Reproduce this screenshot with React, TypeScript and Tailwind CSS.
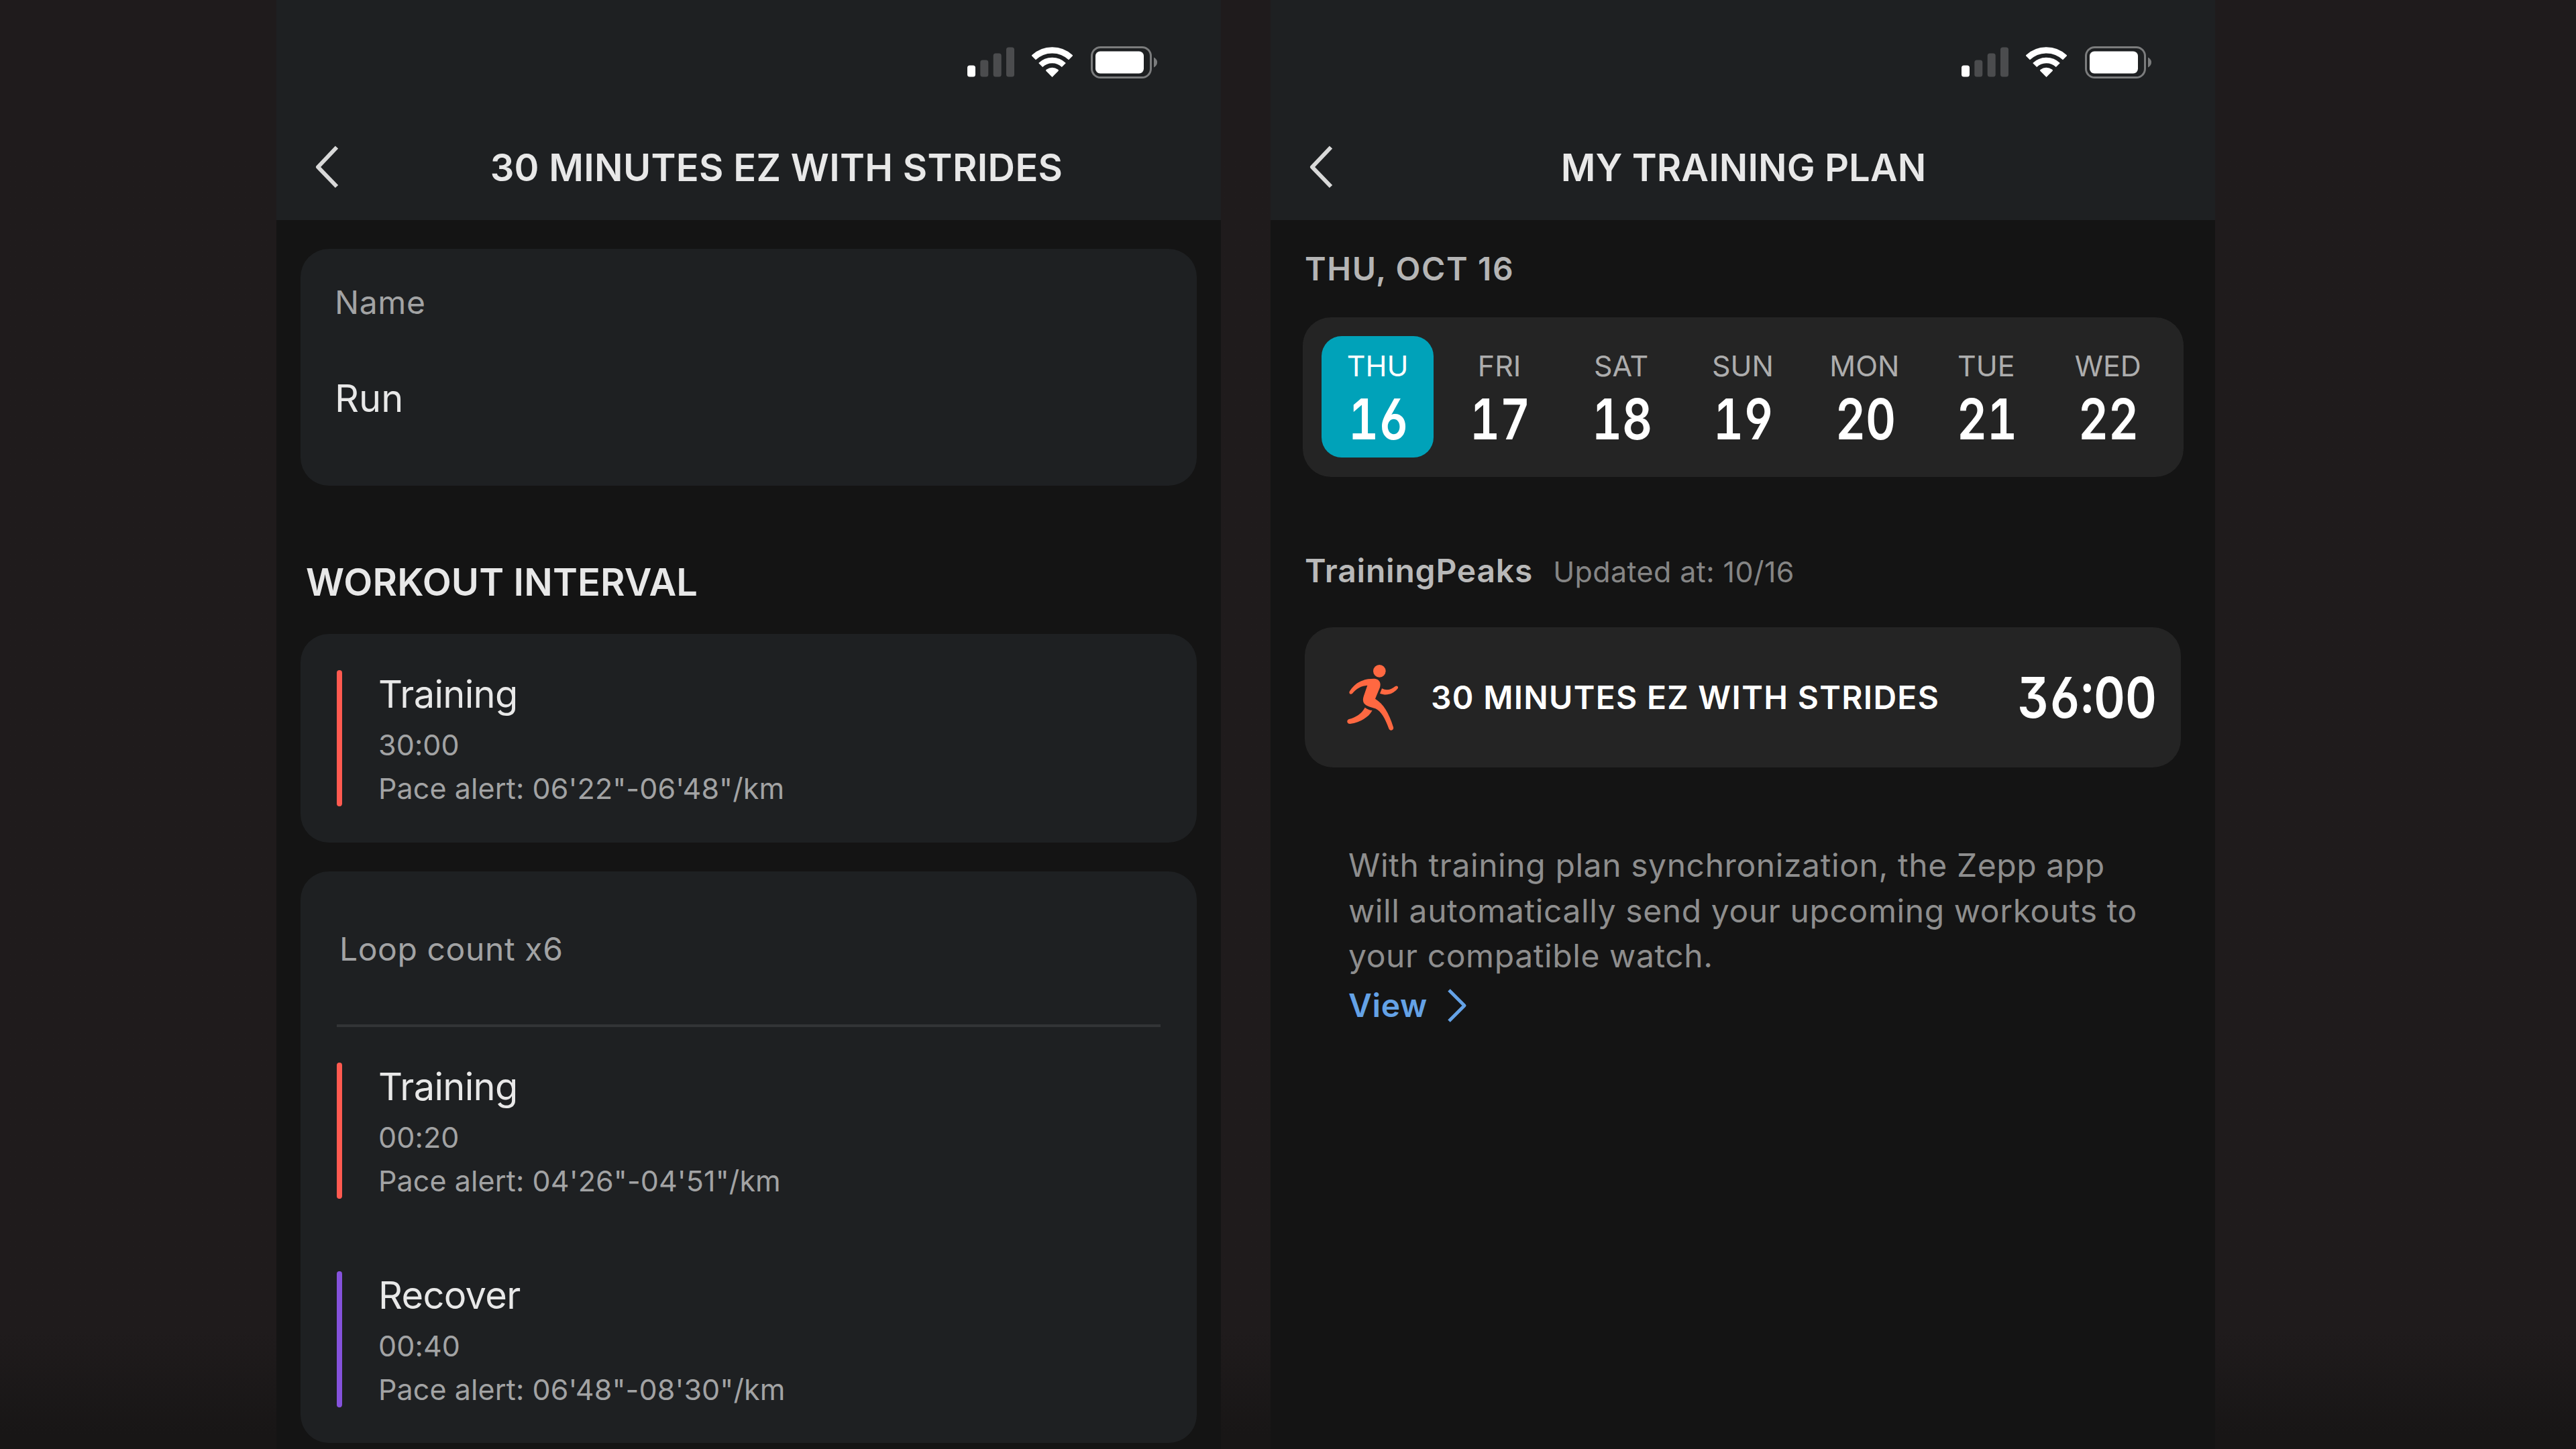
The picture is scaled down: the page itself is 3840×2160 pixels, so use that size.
import type { ReactNode } from 'react';
import clsx from 'clsx';

type Step = {
  title: string;
  duration: string;
  pace: string;
  kind: 'training' | 'recover';
};

const warmup: Step = {
  title: 'Training',
  duration: '30:00',
  pace: `Pace alert: 06'22"-06'48"/km`,
  kind: 'training',
};

const loopSteps: Step[] = [
  { title: 'Training', duration: '00:20', pace: `Pace alert: 04'26"-04'51"/km`, kind: 'training' },
  { title: 'Recover', duration: '00:40', pace: `Pace alert: 06'48"-08'30"/km`, kind: 'recover' },
];

const days = [
  { label: 'THU', date: 16 },
  { label: 'FRI', date: 17 },
  { label: 'SAT', date: 18 },
  { label: 'SUN', date: 19 },
  { label: 'MON', date: 20 },
  { label: 'TUE', date: 21 },
  { label: 'WED', date: 22 },
];

const activeDate = 16;

const StatusIcons = () => (
  <div className="flex items-center">
    <svg className="w-[70px] h-[45px]" viewBox="0 0 70 45">
      <rect x="0" y="27.5" width="12" height="17" rx="3.5" fill="#fff" />
      <rect x="19.3" y="19.5" width="12" height="25" rx="3.5" fill="#4b4c4e" />
      <rect x="38.7" y="9.5" width="12" height="35" rx="3.5" fill="#4b4c4e" />
      <rect x="58" y="0.5" width="12" height="44" rx="3.5" fill="#4b4c4e" />
    </svg>
    <svg className="ml-[26px] w-[61px] h-[45px]" viewBox="0 0 183 135">
      <g fill="none" stroke="#fff">
        <path d="M8.1 48A120.5 120.5 0 0 1 174.9 48" strokeWidth="28" />
        <path d="M39.5 81A75 75 0 0 1 143.5 81" strokeWidth="26" />
      </g>
      <path d="M91.5 135L64 107Q62 104 65 101Q91.5 83 118 101Q121 104 119 107Z" fill="#fff" />
    </svg>
    <svg className="ml-[27px] w-[100px] h-[48px]" viewBox="0 0 100 48">
      <rect x="1.5" y="1.5" width="88" height="45" rx="13" fill="none" stroke="#7b7c7d" strokeWidth="3" />
      <rect x="7" y="7.5" width="72" height="33" rx="7" fill="#fff" />
      <path d="M94 16.5Q99 19 99 24T94 31.5Z" fill="#7b7c7d" />
    </svg>
  </div>
);

const Runner = () => (
  <svg className="w-[78px] h-[100px]" viewBox="80 88 234 300" fill="#ff6841">
    <circle cx="228" cy="119" r="28" />
    <path d="M95 209C116 177 146 152 206 153C228 155 236 172 230 192L209 243C246 266 270 305 290 370C294 383 275 390 270 377C253 330 235 298 210 287C190 280 170 278 158 262C152 250 155 240 158 230L174 183C146 185 126 197 107 219C98 227 89 218 95 209Z" />
    <path d="M239 197C260 208 278 203 299 187C308 181 316 191 308 199C288 222 260 231 230 219Z" />
    <path d="M163 282C174 290 184 294 196 295C180 326 140 349 97 355C82 356 79 338 92 334C125 325 150 308 163 282Z" />
  </svg>
);

type PhoneProps = {
  title: string;
  titleClass?: string;
  children: ReactNode;
};

const Phone = ({ title, titleClass, children }: PhoneProps) => (
  <section className="flex h-full w-[1408px] shrink-0 flex-col bg-[#141414]">
    <header className="h-[328px] shrink-0 bg-[#1e2022]">
      <div className="flex h-[185px] items-center justify-end pr-[94px]">
        <StatusIcons />
      </div>
      <div className="grid h-[130px] grid-cols-[120px_1fr_120px] items-center">
        <svg
          className="mb-[3px] ml-[58px] h-[64px] w-[36px]"
          viewBox="0 0 36 64"
          fill="none"
          stroke="#d9d9d9"
          strokeWidth="6"
          strokeLinejoin="round"
        >
          <path d="M32 2.5L4 32L32 61" />
        </svg>
        <h1
          className={clsx(
            'text-center text-[56px] font-semibold whitespace-nowrap text-[#e8e8e8]',
            titleClass
          )}
        >
          {title}
        </h1>
      </div>
    </header>
    {children}
  </section>
);

const StepRow = ({ step }: { step: Step }) => (
  <div className="flex h-[203px] gap-[54px]">
    <div
      className={clsx(
        'w-2 rounded-full',
        step.kind === 'training' ? 'bg-[#ff5a50]' : 'bg-[#8552dc]'
      )}
    />
    <div className="pt-[2px] text-[43px] tracking-[0.1px] text-[#a2a3a4]">
      <h3 className="text-[56px] leading-[68px] tracking-[-0.7px] text-[#e8e8e8]">{step.title}</h3>
      <p className="mt-[14px] leading-[54px]">{step.duration}</p>
      <p className="mt-[11px] leading-[54px]">{step.pace}</p>
    </div>
  </div>
);

const WorkoutScreen = () => (
  <Phone title="30 MINUTES EZ WITH STRIDES" titleClass="pl-[83px] tracking-[0.33px]">
    <main className="px-9 pt-[43px]">
      <div className="h-[353px] rounded-[42px] bg-[#1e2022] pt-[50px] pl-[51px]">
        <p className="text-[48px] leading-[60px] tracking-[0.6px] text-[#a2a3a4]">Name</p>
        <p className="mt-[79px] text-[56px] leading-[68px] text-[#e8e8e8]">Run</p>
      </div>

      <h2 className="mt-[110px] pl-[8px] text-[56px] leading-[68px] font-semibold tracking-[0.15px] text-[#e8e8e8]">
        WORKOUT INTERVAL
      </h2>

      <div className="mt-[43px] rounded-[42px] bg-[#1e2022] py-[54px] pl-[54px]">
        <StepRow step={warmup} />
      </div>

      <div className="mt-[43px] rounded-[42px] bg-[#1e2022] px-[54px] pb-[53px]">
        <div className="flex h-[228px] items-center pt-1 pl-[4px] text-[48px] tracking-[0.6px] text-[#a2a3a4]">
          Loop count x6
        </div>
        <div className="h-1 bg-[#323436]" />
        <div className="flex flex-col gap-[108px] pt-[53px]">
          {loopSteps.map((step) => (
            <StepRow key={step.duration} step={step} />
          ))}
        </div>
      </div>
    </main>
  </Phone>
);

const PlanScreen = () => (
  <Phone title="MY TRAINING PLAN" titleClass="pl-[2px] tracking-[0.1px]">
    <main className="pt-[43px]">
      <p className="pl-[51px] text-[48px] leading-[60px] font-semibold tracking-[1.6px] text-[#b5b5b5]">
        THU, OCT 16
      </p>

      <div className="mr-[47px] ml-[48px] mt-[42px] grid h-[238px] grid-cols-7 justify-items-center rounded-[42px] bg-[#242424] pt-[28px] pr-[22px] pl-[21px]">
        {days.map(({ label, date }) => {
          const active = date === activeDate;
          return (
            <div
              key={date}
              className={clsx(
                'flex h-[181px] w-[167px] flex-col items-center rounded-[30px] pt-[19px]',
                active && 'bg-[#00a2b9]'
              )}
            >
              <span className={clsx('text-[43px] leading-[50px]', active ? 'text-white' : 'text-[#adadad]')}>
                {label}
              </span>
              <span className="mt-[15px] scale-x-[0.83] pl-[3px] text-[84px] leading-[80px] font-semibold text-white [font-feature-settings:'tnum','cv03','cv04']">
                {date}
              </span>
            </div>
          );
        })}
      </div>

      <div className="mt-[110px] flex items-baseline gap-[30px] pl-[51px] leading-[60px]">
        <h2 className="text-[48px] leading-[60px] font-semibold tracking-[0.8px] text-[#b9b9b9]">TrainingPeaks</h2>
        <span className="text-[43px] tracking-[0.4px] text-[#858585]">Updated at: 10/16</span>
      </div>

      <div className="mx-[51px] mt-[53px] flex h-[209px] items-center rounded-[42px] bg-[#242424] pr-[36px] pl-[62px]">
        <Runner />
        <span className="ml-[48px] text-[48px] font-semibold tracking-[1.3px] whitespace-nowrap text-white">
          30 MINUTES EZ WITH STRIDES
        </span>
        <span className="ml-auto origin-right scale-x-[0.865] text-[84px] font-semibold text-white [font-feature-settings:'tnum','cv03','cv04','cv09']">
          36:00
        </span>
      </div>

      <div className="mt-[112px] pl-[116px]">
        <p className="text-[48px] leading-[67.5px] tracking-[0.59px] text-[#8e8e8e]">
          With training plan synchronization, the Zepp app
          <br />
          will automatically send your upcoming workouts to
          <br />
          your compatible watch.
        </p>
        <a className="mt-[10px] flex items-center gap-[29px] text-[48px] leading-[60px] font-semibold tracking-[0.6px] text-[#64a2e6]">
          View
          <svg className="h-[50px] w-[30px]" viewBox="0 0 30 50" fill="none" stroke="currentColor" strokeWidth="5">
            <path d="M3 2L26 25L3 48" strokeLinejoin="round" />
          </svg>
        </a>
      </div>
    </main>
  </Phone>
);

const App = () => (
  <div className="flex h-[2160px] w-[3840px] gap-[74px] overflow-hidden bg-linear-to-b from-[#1f1b1c] from-92% to-[#181616] to-99% pl-[412px] font-[Inter,'Liberation_Sans',sans-serif]">
    <WorkoutScreen />
    <PlanScreen />
  </div>
);

export default App;
